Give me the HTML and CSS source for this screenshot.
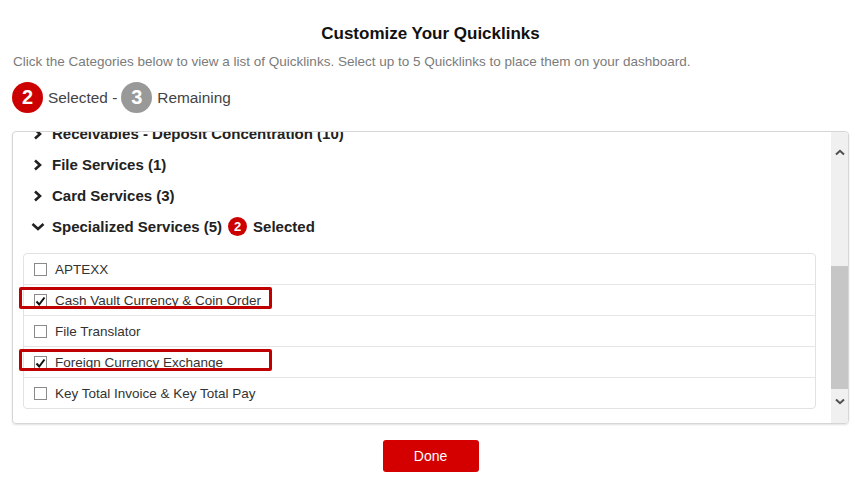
FILE: index.html
```html
<!DOCTYPE html>
<html lang="en">
<head>
  <meta charset="UTF-8">
  <title>Customize Your Quicklinks</title>
  <link rel="stylesheet" href="styles.css">
</head>
<body>
  <div class="modal">
    <h2 class="title">Customize Your Quicklinks</h2>
    <p class="intro">Click the Categories below to view a list of Quicklinks. Select up to 5 Quicklinks to place them on your dashboard.</p>

    <div class="counter">
      <span class="count count-red">2</span>
      <span class="counter-label">Selected -</span>
      <span class="count count-gray">3</span>
      <span class="counter-label">Remaining</span>
    </div>

    <div class="panel">
      <div class="panel-body">
        <div class="scroll-content">
          <div class="category">
            <svg class="chev" width="10" height="12" viewBox="0 0 10 12"><path d="M2 1.5 L7 6 L2 10.5" fill="none" stroke="#222" stroke-width="2.6"/></svg>
            <span>Receivables - Deposit Concentration (10)</span>
          </div>
          <div class="category">
            <svg class="chev" width="10" height="12" viewBox="0 0 10 12"><path d="M2 1.5 L7 6 L2 10.5" fill="none" stroke="#222" stroke-width="2.6"/></svg>
            <span>File Services (1)</span>
          </div>
          <div class="category">
            <svg class="chev" width="10" height="12" viewBox="0 0 10 12"><path d="M2 1.5 L7 6 L2 10.5" fill="none" stroke="#222" stroke-width="2.6"/></svg>
            <span>Card Services (3)</span>
          </div>
          <div class="category open">
            <svg class="chev chev-down" width="14" height="10" viewBox="0 0 14 10"><path d="M1.5 2 L7 7 L12.5 2" fill="none" stroke="#222" stroke-width="2.6"/></svg>
            <span>Specialized Services (5)</span>
            <span class="mini-badge">2</span>
            <span>Selected</span>
          </div>

          <ul class="links">
            <li class="link-item">
              <span class="check"></span>
              <span>APTEXX</span>
            </li>
            <li class="link-item">
              <span class="check checked"><svg width="11" height="11" viewBox="0 0 11 11"><path d="M1.5 5.5 L4.2 8.5 L9.5 1.5" fill="none" stroke="#111" stroke-width="2"/></svg></span>
              <span>Cash Vault Currency &amp; Coin Order</span>
              <span class="mark"></span>
            </li>
            <li class="link-item">
              <span class="check"></span>
              <span>File Translator</span>
            </li>
            <li class="link-item">
              <span class="check checked"><svg width="11" height="11" viewBox="0 0 11 11"><path d="M1.5 5.5 L4.2 8.5 L9.5 1.5" fill="none" stroke="#111" stroke-width="2"/></svg></span>
              <span>Foreign Currency Exchange</span>
              <span class="mark"></span>
            </li>
            <li class="link-item">
              <span class="check"></span>
              <span>Key Total Invoice &amp; Key Total Pay</span>
            </li>
          </ul>
        </div>
      </div>

      <div class="scrollbar">
        <div class="sb-btn sb-up">
          <svg width="10" height="7" viewBox="0 0 10 7"><path d="M1 5.5 L5 1.8 L9 5.5" fill="none" stroke="#505050" stroke-width="2"/></svg>
        </div>
        <div class="sb-thumb"></div>
        <div class="sb-btn sb-down">
          <svg width="10" height="7" viewBox="0 0 10 7"><path d="M1 1.5 L5 5.2 L9 1.5" fill="none" stroke="#505050" stroke-width="2"/></svg>
        </div>
      </div>
    </div>

    <div class="actions">
      <button class="done-btn">Done</button>
    </div>
  </div>
</body>
</html>
```

FILE: styles.css
```css
body {
  margin: 0;
  background: #fff;
  font-family: "Liberation Sans", Arial, sans-serif;
  color: #333;
}

.modal {
  padding: 24px 6px 0 12px;
}

.title {
  margin: 0;
  text-align: center;
  font-size: 17px;
  line-height: 20px;
  font-weight: bold;
  color: #111;
}

.intro {
  margin: 9px 0 0 1px;
  font-size: 13.5px;
  line-height: 18px;
  color: #7b7b7b;
}

.counter {
  display: flex;
  align-items: center;
  margin-top: 11px;
  height: 31px;
  font-size: 15.4px;
  color: #444;
}

.count {
  display: flex;
  align-items: center;
  justify-content: center;
  width: 31px;
  height: 31px;
  border-radius: 50%;
  color: #fff;
  font-weight: bold;
  font-size: 20px;
}

.count-red {
  background: #cc0000;
  margin-right: 5px;
}

.count-gray {
  background: #999;
  margin: 0 5px 0 4px;
}

.panel {
  display: flex;
  margin-top: 18px;
  height: 293px;
  border: 1px solid #d6d6d6;
  border-radius: 4px;
  box-shadow: 0 1px 2px rgba(0,0,0,0.12);
  box-sizing: border-box;
  overflow: hidden;
}

.panel-body {
  flex: 1;
  overflow: hidden;
}

.scroll-content {
  margin-top: -14px;
}

.category {
  display: flex;
  align-items: center;
  height: 31px;
  padding-left: 20px;
  font-size: 15px;
  font-weight: bold;
  color: #222;
}

.chev {
  margin-right: 9px;
}

.chev-down {
  margin: 0 7px 0 -2px;
}

.mini-badge {
  display: inline-flex;
  align-items: center;
  justify-content: center;
  width: 19px;
  height: 19px;
  margin: 0 6px 0 6px;
  border-radius: 50%;
  background: #cc0000;
  color: #fff;
  font-size: 13px;
}

.links {
  list-style: none;
  margin: 11px 15px 0 10px;
  padding: 0;
  border: 1px solid #e2e2e2;
  border-radius: 4px;
}

.link-item {
  position: relative;
  display: flex;
  align-items: center;
  box-sizing: border-box;
  height: 31px;
  padding-left: 10px;
  border-top: 1px solid #e6e6e6;
  font-size: 13.5px;
  color: #333;
}

.link-item:first-child {
  border-top: none;
  height: 30px;
}

.check {
  display: flex;
  align-items: center;
  justify-content: center;
  width: 11px;
  height: 11px;
  margin-right: 8px;
  border: 1px solid #8a8a8a;
  background: #fff;
}

.check svg {
  margin-top: 3px;
}

.mark {
  position: absolute;
  left: -5px;
  top: 2px;
  width: 247px;
  height: 16px;
  border: 3px solid #c00000;
  border-radius: 2px;
}

.scrollbar {
  display: flex;
  flex-direction: column;
  width: 17px;
  background: #f0f0f0;
}

.sb-btn {
  display: flex;
  justify-content: center;
}

.sb-up {
  height: 41px;
  align-items: center;
  margin-bottom: 93px;
}

.sb-thumb {
  height: 123px;
  background: #c6c6c6;
}

.sb-down {
  padding-top: 9px;
}

.actions {
  display: flex;
  justify-content: center;
  margin-top: 16px;
}

.done-btn {
  width: 96px;
  height: 32px;
  border: none;
  border-radius: 3px;
  background: #d40000;
  color: #fff;
  font-family: "Liberation Sans", Arial, sans-serif;
  font-size: 14px;
  cursor: pointer;
}
```
